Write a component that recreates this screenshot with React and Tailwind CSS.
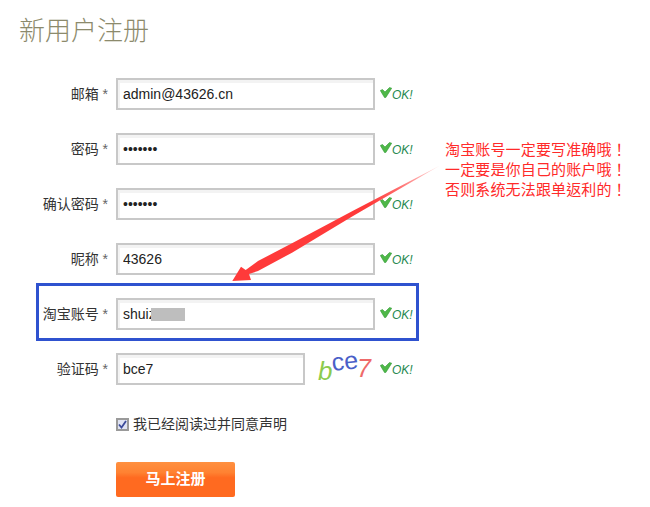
const sans = '"Liberation Sans", "Noto Sans CJK SC", sans-serif';

function Ok() {
  return (
    <div className="flex items-center pt-[1px]">
      <svg width="12" height="12" viewBox="0 0 12 12" className="mb-[4px]">
        <path d="M0.3 3.5 L2.5 2.5 L5 5 L9.5 0.5 L11.7 1.2 L5.8 10.5 L4.5 10.5 Z" fill="#4fb848" stroke="#2f9a35" strokeWidth="0.6" />
      </svg>
      <span className="text-[12px] italic text-[#25894f]">OK!</span>
    </div>
  );
}

function Row({ label, type = 'text', value, width = 'w-[259px]', mask, captcha }) {
  return (
    <div className="flex items-center h-[32px] mb-[23px]">
      <label className="w-[108px] text-right text-[14px] text-[#333]">
        {label} <span className="text-[#666]">*</span>
      </label>
      <div className={`relative ml-[8px] mr-[5px] h-[32px] ${width}`}>
        <input
          readOnly
          type={type}
          value={value}
          className="w-full h-full border-2 border-[#c8c8c8] bg-white pl-[5px] text-[14px] text-[#222] shadow-[inset_2px_3px_0_#f3f3f3] outline-none"
          style={{ fontFamily: sans }}
        />
        {mask && <div className="absolute left-[35px] top-[10px] w-[34px] h-[13px] bg-[#bebebe]" />}
      </div>
      {captcha && (
        <svg width="70" height="32" viewBox="0 0 70 32" className="shrink-0 overflow-visible" style={{ fontFamily: sans }}>
          <text x="8" y="27" fontSize="26" fontStyle="italic" fill="#8ccb4e">b</text>
          <text x="22" y="17" fontSize="25" fill="#4a5fc8" transform="rotate(-6 33 12)">ce</text>
          <text x="47" y="24" fontSize="25" fontStyle="italic" fill="#ee6a6a">7</text>
        </svg>
      )}
      <Ok />
    </div>
  );
}

export default function App() {
  return (
    <div className="relative w-[650px] h-[507px] overflow-hidden bg-white" style={{ fontFamily: sans }}>
      <h1 className="pl-[19px] pt-[14px] h-[78px] text-[26px] leading-[34px] font-light text-[#8c8a6c]">新用户注册</h1>

      <div className="flex flex-col">
        <Row label="邮箱" value="admin@43626.cn" />
        <Row label="密码" type="password" value="1234567" />
        <Row label="确认密码" type="password" value="1234567" />
        <Row label="昵称" value="43626" />
        <Row label="淘宝账号" value="shuiz" mask />
        <Row label="验证码" value="bce7" width="w-[189px]" captcha />
      </div>

      <div className="flex items-center ml-[116px] mt-[6px] h-[20px]">
        <div className="w-[13px] h-[13px] border-2 border-[#9a9a9a] bg-[#dfe3f3] flex items-center justify-center">
          <svg width="9" height="9" viewBox="0 0 9 9">
            <path d="M1 4.5 L3.5 7.5 L8 1" fill="none" stroke="#3b4a9a" strokeWidth="1.8" />
          </svg>
        </div>
        <span className="ml-[4px] text-[14px] text-[#333]">我已经阅读过并同意声明</span>
      </div>

      <button className="block ml-[116px] mt-[28px] w-[119px] h-[35px] rounded-[2px] bg-[linear-gradient(#ff9040_0%,#ff8232_30%,#ff6a20_45%,#ff6a20_100%)] text-white text-[15px] font-bold">
        马上注册
      </button>

      {/* highlight frame */}
      <div className="absolute left-[36px] top-[283px] w-[383px] h-[58px] border-[3px] border-[#2f52cf] pointer-events-none" />

      {/* arrow */}
      <svg className="absolute left-0 top-0 pointer-events-none" width="650" height="507" viewBox="0 0 650 507">
        <defs>
          <linearGradient id="arrowFade" x1="440" y1="165" x2="370" y2="205" gradientUnits="userSpaceOnUse">
            <stop offset="0" stopColor="#ffe4e4" />
            <stop offset="0.6" stopColor="#ff6a6a" />
            <stop offset="1" stopColor="#ff3a3a" />
          </linearGradient>
        </defs>
        <path d="M440 165.5 L353 210.7 L292 243.3 L258 261 L245.7 270 L241 266.7 L232.3 281 L251 280 L249 274 L258 271 L292 252.7 L353 216 Z" fill="url(#arrowFade)" />
      </svg>

      {/* annotation */}
      <div
        className="absolute left-[445px] top-[139px] text-[15px] leading-[20px] tracking-[0.15px] text-[#ff2a2a] whitespace-nowrap"
        style={{ fontFamily: '"Noto Sans CJK TC", sans-serif' }}
      >
        <div>淘宝账号一定要写准确哦！</div>
        <div>一定要是你自己的账户哦！</div>
        <div>否则系统无法跟单返利的！</div>
      </div>
    </div>
  );
}
